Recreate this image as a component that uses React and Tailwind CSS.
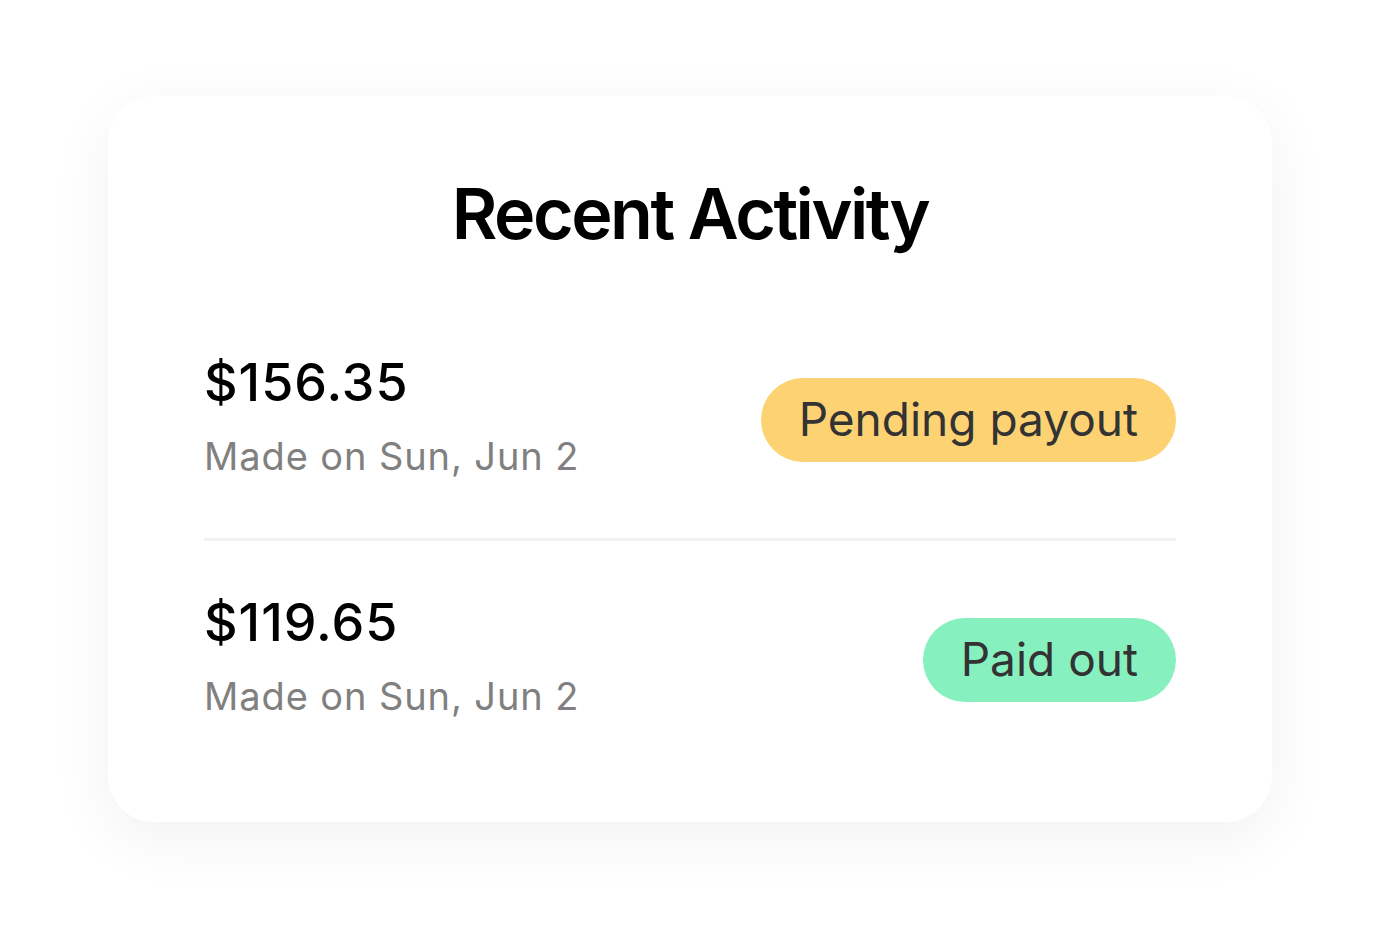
export default function App() {
  const rows = [
    { amount: "$156.35", label: "Pending payout", color: "bg-[#fdd273]" },
    { amount: "$119.65", label: "Paid out", color: "bg-[#86f0bf]" },
  ];
  return (
    <div className="w-[1380px] h-[942px] bg-white pt-[96px]" style={{ fontFamily: "Inter, 'Noto Sans', sans-serif" }}>
      <div className="mx-auto w-[1164px] h-[726px] rounded-[46px] bg-white shadow-[0_16px_64px_rgba(0,0,0,0.06)] pt-[83px] px-[96px]">
        <h1 className="text-center text-[70px] leading-none font-semibold text-black tracking-[-2.5px]">Recent Activity</h1>
        <Row r={rows[0]} className="mt-[108px]" />
        <div className="mt-[60px] h-[3px] bg-[#f2f2f0]" />
        <Row r={rows[1]} className="mt-[56px]" />
      </div>
    </div>
  );
}

function Row({ r, className }) {
  return (
    <div className={"flex justify-between items-center " + className}>
      <div className="flex flex-col">
        <div className="text-[52px] leading-none font-medium text-black tracking-[1px]">{r.amount}</div>
        <div className="mt-[25px] text-[38px] leading-[44px] text-[#808080] tracking-[0.9px]">Made on Sun, Jun 2</div>
      </div>
      <div className={"mt-[4px] h-[84px] rounded-full px-[38px] flex items-center text-[46px] text-[#333333] " + r.color}>
        {r.label}
      </div>
    </div>
  );
}
